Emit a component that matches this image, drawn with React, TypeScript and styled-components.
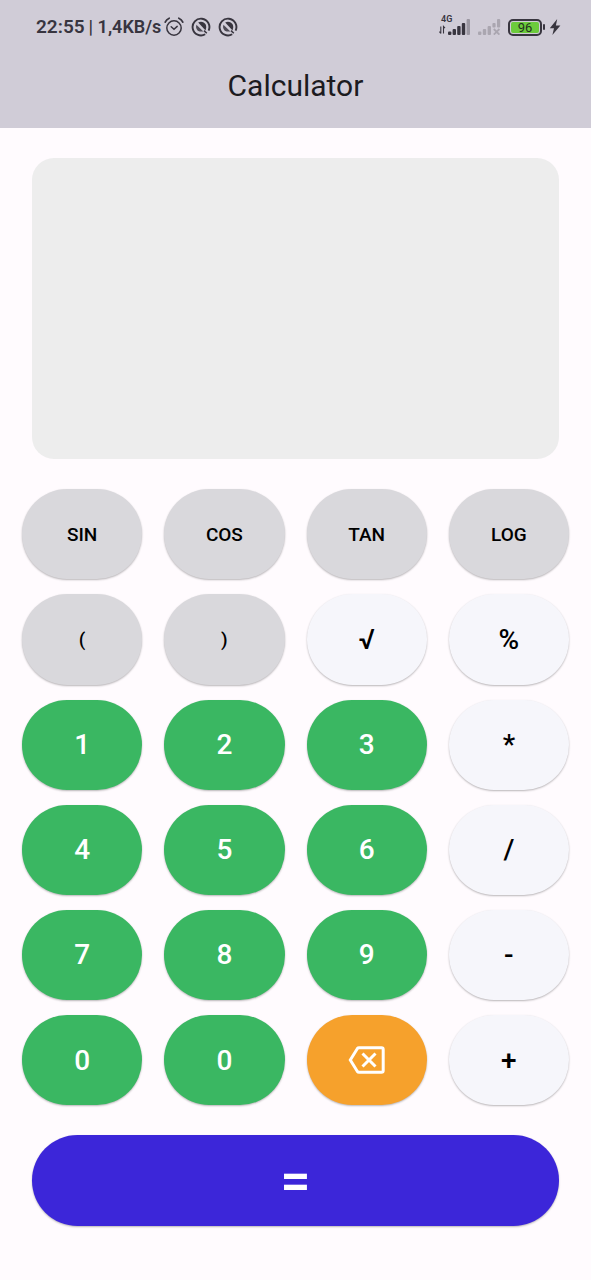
import React from "react";
import styled, { createGlobalStyle, css } from "styled-components";

const GlobalStyle = createGlobalStyle`
  *, *::before, *::after { box-sizing: border-box; }
  body {
    margin: 0;
    background: #fffbfe;
    font-family: Roboto, "Liberation Sans", sans-serif;
  }
  svg { display: block; flex: none; }
`;

const Screen = styled.div`
  min-height: 100vh;
  display: flex;
  flex-direction: column;
`;

const Header = styled.header`
  padding-bottom: 10px;
  background: #d0ccd7;
  color: #1c1b1f;
`;

const StatusBar = styled.div`
  display: flex;
  justify-content: space-between;
  align-items: center;
  height: 54px;
  padding: 0 30px 0 36px;
  color: #38353f;
`;

const StatusGroup = styled.div<{ $gap: number }>`
  display: flex;
  align-items: center;
  gap: ${({ $gap }) => $gap}px;
`;

const StatusText = styled.span<{ $size: number }>`
  font-size: ${({ $size }) => $size}px;
  line-height: 24px;
  font-weight: 600;
  white-space: pre;
`;

const SignalBlock = styled.div`
  display: flex;
  flex-direction: column;
  height: 24px;
`;

const NetworkType = styled.span`
  margin-bottom: -4px;
  padding-left: 2px;
  font-size: 9px;
  line-height: 8px;
  font-weight: 600;
`;

const Battery = styled.div`
  display: flex;
  align-items: center;
  gap: 1px;

  &::after {
    content: "";
    width: 2px;
    height: 6px;
    border-radius: 1px;
    background: #38353f;
  }
`;

const BatteryCell = styled.div`
  width: 34px;
  height: 17px;
  padding: 1px;
  border: 2px solid #38353f;
  border-radius: 5px;
`;

const BatteryLevel = styled.div`
  height: 11px;
  border-radius: 2px;
  background: #6ccb3c;
  color: #23301f;
  font-size: 13px;
  line-height: 12px;
  text-align: center;
`;

const Title = styled.h1`
  margin: 0;
  font-size: 30px;
  line-height: 64px;
  font-weight: 400;
  text-align: center;
`;

const Main = styled.main`
  display: flex;
  flex-direction: column;
  gap: 30px;
  padding: 30px 0 53px;
`;

const Display = styled.output`
  display: block;
  margin: 0 32px;
  aspect-ratio: 7 / 4;
  border-radius: 22px;
  background: #ededed;
`;

const Keypad = styled.div`
  display: grid;
  grid-template-columns: repeat(4, 1fr);
  gap: 15px 22px;
  padding: 0 22px;
`;

type Tone = "function" | "operator" | "digit" | "erase" | "equals";

const tones: Record<Tone, { background: string; color: string }> = {
  function: { background: "#d9d8dc", color: "#000" },
  operator: { background: "#f6f6fb", color: "#000" },
  digit: { background: "#3ab762", color: "#fff" },
  erase: { background: "#f6a12c", color: "#fff" },
  equals: { background: "#3c26d9", color: "#fff" },
};

const buttonBase = css<{ $tone: Tone }>`
  display: flex;
  align-items: center;
  justify-content: center;
  padding: 0;
  border: 0;
  border-radius: 46px;
  font-family: inherit;
  font-weight: 500;
  cursor: pointer;
  box-shadow: 0 1px 2px rgba(0, 0, 0, 0.28);
  background: ${({ $tone }) => tones[$tone].background};
  color: ${({ $tone }) => tones[$tone].color};
`;

const Key = styled.button<{ $tone: Tone }>`
  ${buttonBase}
  aspect-ratio: 4 / 3;
  font-size: ${({ $tone }) => ($tone === "function" ? 19 : 28)}px;
`;

const EqualsKey = styled.button<{ $tone: Tone }>`
  ${buttonBase}
  height: 91px;
  margin: 0 32px;
  font-size: 54px;
  line-height: 60px;
`;

const AlarmIcon = () => (
  <svg width="20" height="20" viewBox="0 0 20 20" fill="none" stroke="currentColor" strokeLinecap="round">
    <circle cx="10" cy="11" r="7.2" strokeWidth="1.5" />
    <path d="M1.2 5.2Q2.4 2.4 5.2 1.2M18.8 5.2Q17.6 2.4 14.8 1.2" strokeWidth="1.7" />
    <path d="M7.2 9.8L10 12.2L13.2 9.4" strokeWidth="1.5" />
  </svg>
);

const AppBadgeIcon = () => (
  <svg width="20" height="20" viewBox="0 0 20 20" fill="none" stroke="currentColor">
    <path d="M14.2 17.3A8.4 8.4 0 1 1 17.6 13.6" strokeWidth="1.9" />
    <path d="M7.2 5.6A5.2 5.2 0 0 1 15.2 10.4L14.6 13.4Z" fill="currentColor" stroke="none" />
    <path d="M5.4 7.8L12.4 14.6H8.6A5.2 5.2 0 0 1 5.4 7.8Z" fill="currentColor" stroke="none" opacity="0.85" />
    <path d="M13 13.6L15.8 16.2" strokeWidth="1.5" />
  </svg>
);

const SignalIcon = () => (
  <svg width="32" height="16" viewBox="0 0 32 16" fill="currentColor">
    <path d="M1.8 7.5V14.5M0.4 12.7L1.8 14.5M4.5 14.5V7.5L6 9.2" fill="none" stroke="currentColor" strokeWidth="1.1" />
    <rect x="9" y="12.5" width="3.4" height="3.5" rx="1" />
    <rect x="13.6" y="10" width="3.4" height="6" rx="1" />
    <rect x="18.2" y="7" width="3.4" height="9" rx="1" />
    <rect x="22.8" y="4" width="3.4" height="12" rx="1" />
    <rect x="27.6" y="0" width="3.4" height="16" rx="1" opacity="0.35" />
  </svg>
);

const NoSignalIcon = () => (
  <svg width="23" height="16" viewBox="0 0 23 16" fill="#aaa6b0">
    <rect x="0" y="12.5" width="3.4" height="3.5" rx="1" />
    <rect x="4.8" y="10" width="3.4" height="6" rx="1" />
    <rect x="9.6" y="7" width="3.4" height="9" rx="1" />
    <rect x="14.4" y="4" width="3.2" height="4.5" rx="1" />
    <rect x="19" y="0" width="3.2" height="8.5" rx="1" />
    <path d="M15.8 10L21.4 15.6M21.4 10L15.8 15.6" stroke="#aaa6b0" strokeWidth="1.8" />
  </svg>
);

const BoltIcon = () => (
  <svg width="12" height="18" viewBox="0 0 12 18" fill="currentColor">
    <path d="M8.2 1L0.8 10.2H5L3.4 17L11.4 7.4H6.9Z" />
  </svg>
);

const BackspaceIcon = () => (
  <svg width="38" height="30" viewBox="0 0 38 30" fill="none" stroke="currentColor" strokeWidth="3">
    <path d="M11 2.7H33.5Q35.2 2.7 35.2 4.4V25.6Q35.2 27.3 33.5 27.3H11Q10 27.3 9.4 26.5L2.3 15L9.4 3.5Q10 2.7 11 2.7Z" />
    <path d="M14.5 8.5L27.5 21.5M27.5 8.5L14.5 21.5" />
  </svg>
);

const keys: { label: string; tone: Tone }[] = [
  { label: "SIN", tone: "function" },
  { label: "COS", tone: "function" },
  { label: "TAN", tone: "function" },
  { label: "LOG", tone: "function" },
  { label: "(", tone: "function" },
  { label: ")", tone: "function" },
  { label: "√", tone: "operator" },
  { label: "%", tone: "operator" },
  { label: "1", tone: "digit" },
  { label: "2", tone: "digit" },
  { label: "3", tone: "digit" },
  { label: "*", tone: "operator" },
  { label: "4", tone: "digit" },
  { label: "5", tone: "digit" },
  { label: "6", tone: "digit" },
  { label: "/", tone: "operator" },
  { label: "7", tone: "digit" },
  { label: "8", tone: "digit" },
  { label: "9", tone: "digit" },
  { label: "-", tone: "operator" },
  { label: "0", tone: "digit" },
  { label: "0", tone: "digit" },
  { label: "Backspace", tone: "erase" },
  { label: "+", tone: "operator" },
];

export default function App() {
  return (
    <Screen>
      <GlobalStyle />
      <Header>
        <StatusBar>
          <StatusGroup $gap={4}>
            <StatusText $size={19}>22:55</StatusText>
            <StatusGroup $gap={3}>
              <StatusText $size={18}>| 1,4KB/s</StatusText>
              <StatusGroup $gap={7}>
                <AlarmIcon />
                <AppBadgeIcon />
                <AppBadgeIcon />
              </StatusGroup>
            </StatusGroup>
          </StatusGroup>
          <StatusGroup $gap={4}>
            <StatusGroup $gap={7}>
              <SignalBlock>
                <NetworkType>4G</NetworkType>
                <SignalIcon />
              </SignalBlock>
              <NoSignalIcon />
              <Battery>
                <BatteryCell>
                  <BatteryLevel>96</BatteryLevel>
                </BatteryCell>
              </Battery>
            </StatusGroup>
            <BoltIcon />
          </StatusGroup>
        </StatusBar>
        <Title>Calculator</Title>
      </Header>
      <Main>
        <Display aria-label="Result" />
        <Keypad>
          {keys.map(({ label, tone }, index) => (
            <Key key={index} type="button" $tone={tone} aria-label={label}>
              {tone === "erase" ? <BackspaceIcon /> : label}
            </Key>
          ))}
        </Keypad>
        <EqualsKey type="button" $tone="equals">=</EqualsKey>
      </Main>
    </Screen>
  );
}
